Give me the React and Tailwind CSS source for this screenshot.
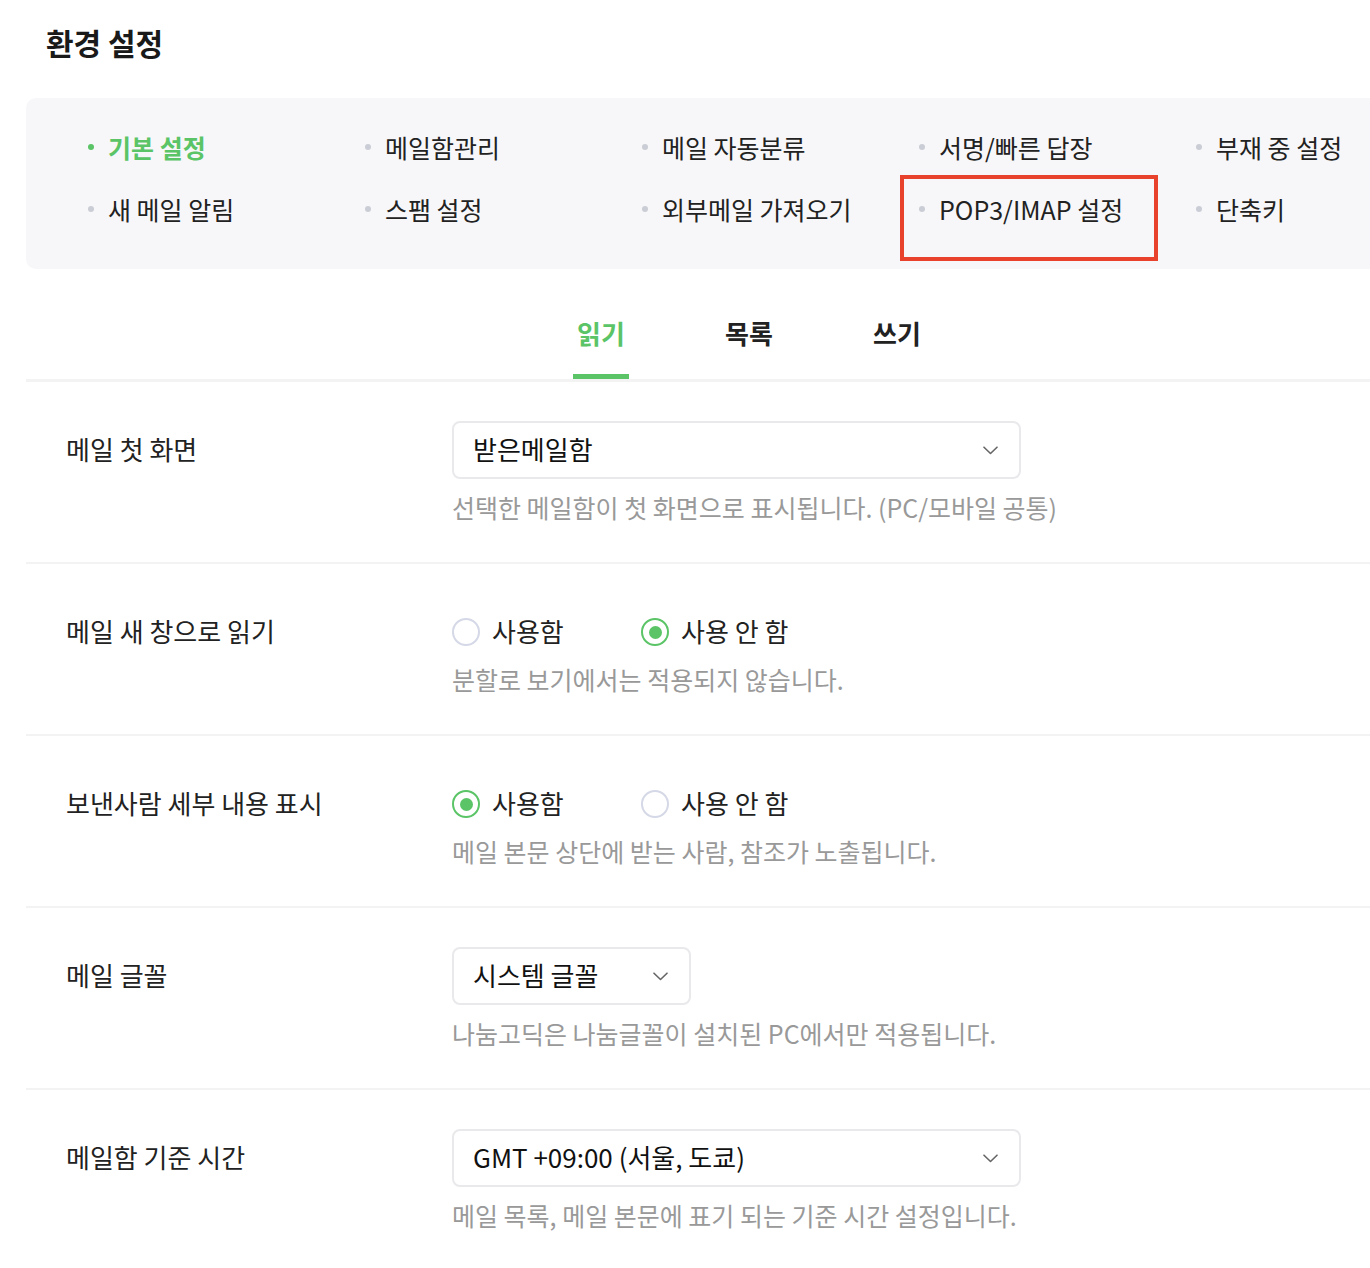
import React from "react";

const FONT = { fontFamily: '"Noto Sans CJK KR", "Noto Sans", sans-serif' };

function Chevron() {
  return (
    <svg width="15" height="9" viewBox="0 0 15 9" fill="none" className="shrink-0">
      <path d="M1 1.2L7.5 7.5L14 1.2" stroke="#666" strokeWidth="1.6" strokeLinecap="round" strokeLinejoin="round" />
    </svg>
  );
}

function Select({ value, wide }) {
  return (
    <div
      className={`${wide ? "w-[569px]" : "w-[239px]"} h-[58px] rounded-[8px] border-2 border-[#e9e9ec] bg-white flex items-center justify-between pl-[19px] pr-[21px]`}
    >
      <span className="text-[26px] text-[#111] leading-none pb-[2px]">{value}</span>
      <Chevron />
    </div>
  );
}

function Radio({ checked, label, first }) {
  return (
    <div className={`flex items-center ${first ? "w-[189px]" : ""}`}>
      {checked ? (
        <span className="w-[28px] h-[28px] rounded-full border-2 border-[#5ac466] flex items-center justify-center">
          <span className="w-[13px] h-[13px] rounded-full bg-[#5ac466]" />
        </span>
      ) : (
        <span className="w-[28px] h-[28px] rounded-full border-2 border-[#d5d8e6] bg-white" />
      )}
      <span className="ml-[12px] text-[26px] text-[#222] leading-none pb-[3px]">{label}</span>
    </div>
  );
}

function Row({ label, children, hint, select, last }) {
  return (
    <div className={`flex pt-[39px] pb-[36px] ${last ? "" : "border-b-2 border-[#f3f3f4]"}`}>
      <div className="w-[426px] shrink-0 pl-[40px] h-[58px] flex items-center pb-[3px]">
        <span className="text-[26px] text-[#222]">{label}</span>
      </div>
      <div className="flex flex-col">
        <div className="h-[58px] flex items-center">{children}</div>
        <div className={`${select ? "mt-[13px]" : "mt-[3px]"} h-[34px] flex items-center text-[25px] text-[#999] pb-[2px]`}>
          {hint}
        </div>
      </div>
    </div>
  );
}

const navItems = [
  ["기본 설정", "메일함관리", "메일 자동분류", "서명/빠른 답장", "부재 중 설정"],
  ["새 메일 알림", "스팸 설정", "외부메일 가져오기", "POP3/IMAP 설정", "단축키"],
];

function NavItem({ text, active, boxed }) {
  return (
    <div className="relative w-[277px] shrink-0 h-[36px] flex items-center">
      <span className={`w-[6px] h-[6px] rounded-full ${active ? "bg-[#5ac466]" : "bg-[#cacdd5]"}`} />
      <span
        className={`ml-[14px] text-[25px] leading-none whitespace-nowrap ${active ? "text-[#5ac466] font-bold" : "text-[#222]"}`}
      >
        {text}
      </span>
      {boxed && (
        <div className="absolute left-[-19px] top-[-16px] w-[258px] h-[86px] border-4 border-[#e8412c]" />
      )}
    </div>
  );
}

export default function App() {
  return (
    <div className="w-full overflow-hidden bg-white min-h-[1268px]" style={FONT}>
      <div className="w-[1500px] pl-[26px]">
        <div className="pt-[22px] pl-[20px] h-[63px]">
          <h1 className="text-[30px] leading-[40px] font-bold text-[#1a1a1a]">환경 설정</h1>
        </div>

        <div className="mt-[35px] h-[171px] bg-[#f7f7f9] rounded-[10px] pl-[62px] pt-[31px] flex flex-col gap-[26px]">
          {navItems.map((row, ri) => (
            <div key={ri} className="flex">
              {row.map((t, ci) => (
                <NavItem key={t} text={t} active={ri === 0 && ci === 0} boxed={ri === 1 && ci === 3} />
              ))}
            </div>
          ))}
        </div>

        <div className="mt-[46px] border-b-[3px] border-[#f3f3f4] flex pl-[501px]">
          {["읽기", "목록", "쓰기"].map((t, i) => (
            <div key={t} className="w-[148px] flex justify-center">
              <span
                className={`h-[64px] pb-[23px] px-[4px] flex items-start text-[26px] leading-[36px] font-bold ${
                  i === 0 ? "text-[#5ac466] border-b-[5px] border-[#5ac466] -mb-[3px]" : "text-[#222]"
                }`}
              >
                {t}
              </span>
            </div>
          ))}
        </div>

        <Row label="메일 첫 화면" hint="선택한 메일함이 첫 화면으로 표시됩니다. (PC/모바일 공통)" select>
          <Select value="받은메일함" wide />
        </Row>
        <Row label="메일 새 창으로 읽기" hint="분할로 보기에서는 적용되지 않습니다.">
          <Radio label="사용함" first />
          <Radio label="사용 안 함" checked />
        </Row>
        <Row label="보낸사람 세부 내용 표시" hint="메일 본문 상단에 받는 사람, 참조가 노출됩니다.">
          <Radio label="사용함" first checked />
          <Radio label="사용 안 함" />
        </Row>
        <Row label="메일 글꼴" hint="나눔고딕은 나눔글꼴이 설치된 PC에서만 적용됩니다." select>
          <Select value="시스템 글꼴" />
        </Row>
        <Row label="메일함 기준 시간" hint="메일 목록, 메일 본문에 표기 되는 기준 시간 설정입니다." select last>
          <Select value="GMT +09:00 (서울, 도쿄)" wide />
        </Row>
      </div>
    </div>
  );
}
